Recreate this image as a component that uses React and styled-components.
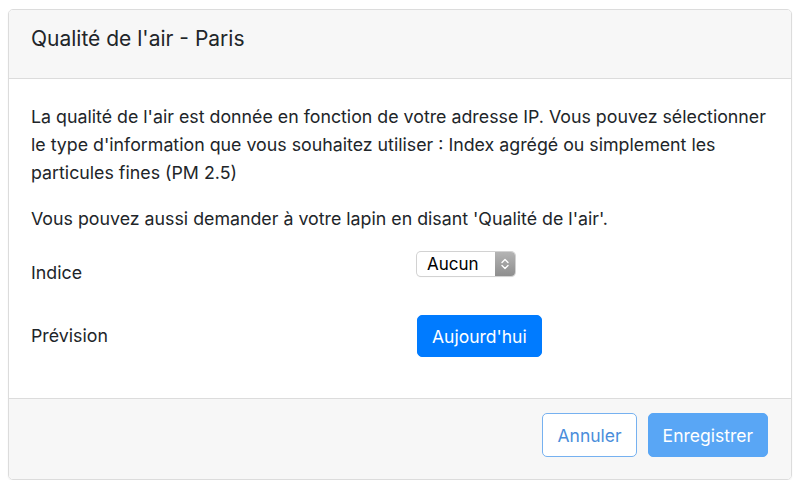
import React from 'react';
import styled, { createGlobalStyle } from 'styled-components';

const FONT = 'Inter, "Liberation Sans", Arial, sans-serif';

const GlobalStyle = createGlobalStyle`
	body {
		margin: 0;
		background: #fff;
		font-family: ${ FONT };
		color: #212529;
	}
`;

const Page = styled.div`
	padding: 9px 8px 0 8px;
	width: 784px;
`;

const Modal = styled.div`
	border: 1px solid #dcdcdc;
	border-radius: 5px;
	overflow: hidden;
	box-shadow: 0 1px 2px rgba(0, 0, 0, .06);
`;

const Header = styled.div`
	display: flex;
	align-items: center;
	height: 69px;
	padding: 0 22px;
	background: #f7f7f7;
	border-bottom: 1px solid #dcdcdc;
	box-sizing: border-box;
`;

const Title = styled.h5`
	margin: 0;
	font-size: 21px;
	font-weight: 400;
	line-height: 1.2;
	padding-bottom: 10px;
`;

const Body = styled.div`
	padding: 24px 22px 27px 22px;
	font-size: 17.8px;
	line-height: 28px;
	border-bottom: 1px solid #dcdcdc;
`;

const Text = styled.p`
	margin: 0 0 ${ ( { gap } ) => gap }px 0;
`;

const FormRow = styled.div`
	display: grid;
	grid-template-columns: 1fr 1fr;
	align-items: center;
	height: ${ ( { h } ) => h }px;
`;

const Label = styled.label`
	display: block;
`;

const Field = styled.div`
	padding-left: 17px;
	display: flex;
	align-items: center;
`;

const SelectBox = styled.div`
	display: flex;
	align-items: stretch;
	width: 98px;
	height: 24px;
	border-radius: 4px;
	background: #fff;
	box-shadow: 0 0 0 1px #d2d2d2, 0 1px 1px rgba(0, 0, 0, .15);
	overflow: hidden;
	margin-top: -18px;
`;

const Select = styled.select`
	appearance: none;
	border: 0;
	outline: 0;
	background: transparent;
	flex: 1;
	min-width: 0;
	padding: 0 0 0 10px;
	font-family: ${ FONT };
	font-size: 17px;
	color: #000;
`;

const Arrows = styled.span`
	width: 20px;
	display: flex;
	align-items: center;
	justify-content: center;
	background: linear-gradient(#b4b4b4, #8e8e8e);
`;

const Button = styled.button`
	font-family: ${ FONT };
	font-size: 17.5px;
	height: ${ ( { h } ) => h }px;
	padding: 0 14px;
	border-radius: 5px;
	cursor: pointer;
	border: 1px solid ${ ( { variant } ) => variant === 'outline' ? '#76b1f0' : variant === 'faded' ? '#59a6f5' : '#007bff' };
	background: ${ ( { variant } ) => variant === 'outline' ? '#fff' : variant === 'faded' ? '#59a6f5' : '#007bff' };
	color: ${ ( { variant } ) => variant === 'outline' ? '#4a8ddb' : '#fff' };
`;

const Footer = styled.div`
	display: flex;
	justify-content: flex-end;
	gap: 11px;
	padding: 14px 23px 22px 23px;
	background: #f7f7f7;
`;

function UpDown() {
	return (
		<svg width="10" height="14" viewBox="0 0 10 14" fill="none" stroke="#fff" strokeWidth="1.4" strokeLinecap="round" strokeLinejoin="round">
			<path d="M2 5.5 L5 2.5 L8 5.5" />
			<path d="M2 8.5 L5 11.5 L8 8.5" />
		</svg>
	);
}

function App() {
	return (
		<Page>
			<GlobalStyle />
			<Modal>
				<Header>
					<Title>Qualité de l'air - Paris</Title>
				</Header>
				<Body>
					<Text gap={ 18 }>
						La qualité de l'air est donnée en fonction de votre adresse IP. Vous pouvez sélectionner
						le type d'information que vous souhaitez utiliser : Index agrégé ou simplement les
						particules fines (PM 2.5)
					</Text>
					<Text gap={ 12 }>
						Vous pouvez aussi demander à votre lapin en disant 'Qualité de l'air'.
					</Text>
					<FormRow h={ 56 }>
						<Label>Indice</Label>
						<Field>
							<SelectBox>
								<Select defaultValue="aucun">
									<option value="aucun">Aucun</option>
									<option value="index">Index agrégé</option>
									<option value="pm25">PM 2.5</option>
								</Select>
								<Arrows><UpDown /></Arrows>
							</SelectBox>
						</Field>
					</FormRow>
					<FormRow h={ 70 }>
						<Label>Prévision</Label>
						<Field>
							<Button h={ 42 }>Aujourd'hui</Button>
						</Field>
					</FormRow>
				</Body>
				<Footer>
					<Button variant="outline" h={ 44 }>Annuler</Button>
					<Button variant="faded" h={ 44 }>Enregistrer</Button>
				</Footer>
			</Modal>
		</Page>
	);
}

export default App;
